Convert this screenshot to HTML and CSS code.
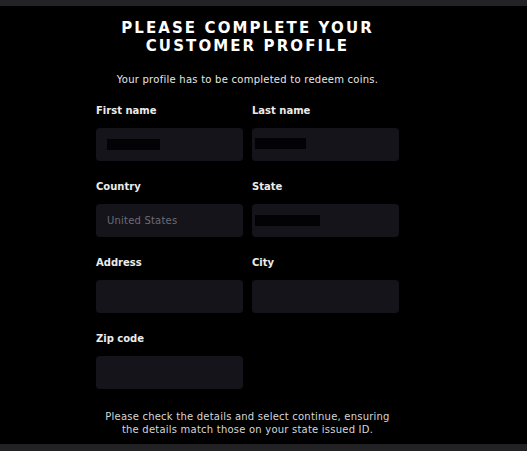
FILE: index.html
```html
<!DOCTYPE html>
<html lang="en">
<head>
<meta charset="utf-8">
<title>Customer profile</title>
<link rel="stylesheet" href="styles.css">
</head>
<body>
<div class="page">
  <div class="topbar"></div>
  <main class="main">
    <h1 class="title">PLEASE COMPLETE YOUR<br>CUSTOMER PROFILE</h1>
    <p class="subtitle">Your profile has to be completed to redeem coins.</p>
    <div class="grid">
      <div class="field">
        <div class="label">First name</div>
        <div class="input"><span class="redact redact-first"></span></div>
      </div>
      <div class="field">
        <div class="label">Last name</div>
        <div class="input"><span class="redact redact-last"></span></div>
      </div>
      <div class="field">
        <div class="label">Country</div>
        <div class="input"><span class="value">United States</span></div>
      </div>
      <div class="field">
        <div class="label">State</div>
        <div class="input"><span class="redact redact-state"></span></div>
      </div>
      <div class="field">
        <div class="label">Address</div>
        <div class="input"></div>
      </div>
      <div class="field">
        <div class="label">City</div>
        <div class="input"></div>
      </div>
      <div class="field">
        <div class="label">Zip code</div>
        <div class="input"></div>
      </div>
    </div>
    <p class="footer-note">Please check the details and select continue, ensuring<br>the details match those on your state issued ID.</p>
  </main>
  <div class="bottombar"></div>
</div>
</body>
</html>
```

FILE: styles.css
```css
html, body {
  margin: 0;
  padding: 0;
  background: #000;
}
body {
  font-family: "DejaVu Sans", "Noto Sans", sans-serif;
  color: #fff;
}
.page {
  height: 451px;
  display: flex;
  flex-direction: column;
  overflow: hidden;
}
.topbar {
  height: 6px;
  background: #232326;
  flex: none;
}
.main {
  flex: 1;
  margin-left: 96px;
  width: 303px;
  padding-top: 13px;
}
.title {
  margin: 0;
  text-align: center;
  font-size: 15px;
  line-height: 18px;
  font-weight: 700;
  letter-spacing: 2.1px;
  color: #fff;
}
.subtitle {
  margin: 18px 0 0;
  text-align: center;
  font-size: 10px;
  line-height: 14px;
  letter-spacing: 0.25px;
  color: #e6e6e6;
}
.grid {
  margin-top: 17px;
  display: grid;
  grid-template-columns: 147px 147px;
  column-gap: 9px;
  row-gap: 19px;
}
.label {
  font-size: 10px;
  line-height: 14px;
  font-weight: 700;
  color: #ececec;
  margin-bottom: 10px;
}
.input {
  height: 33px;
  background: #15141b;
  border-radius: 4px;
  display: flex;
  align-items: center;
  padding-left: 11px;
}
.redact {
  display: block;
  height: 11px;
  background: #030305;
}
.redact-first { width: 53px; }
.redact-last { width: 51px; margin-left: -8px; margin-top: -2px; }
.redact-state { width: 65px; margin-left: -8px; }
.value {
  font-size: 10px;
  letter-spacing: 0.2px;
  color: #6c6b74;
}
.footer-note {
  margin: 21px 0 0;
  text-align: center;
  font-size: 10px;
  line-height: 13px;
  letter-spacing: 0.22px;
  color: #d6d6d6;
}
.bottombar {
  height: 7px;
  background: #222224;
  flex: none;
}
```
